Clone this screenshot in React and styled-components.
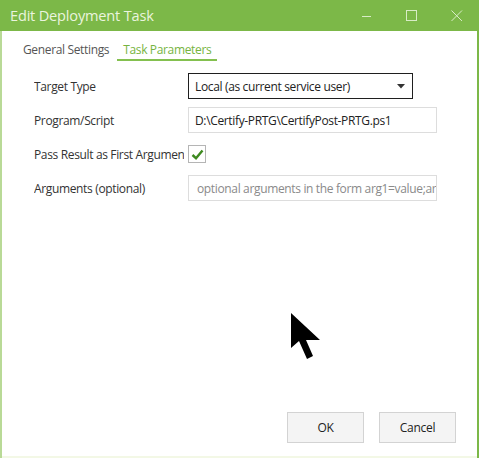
import React from "react";
import styled, { createGlobalStyle } from "styled-components";

const Global = createGlobalStyle`
  html, body { margin: 0; padding: 0; background: #ffffff; }
  body { font-family: "Open Sans", "Noto Sans", sans-serif; }
  * { box-sizing: border-box; }
`;

const Window = styled.div`
  position: relative;
  width: 479px;
  height: 458px;
  display: flex;
  flex-direction: column;
  background: #7cb848;
  overflow: hidden;
`;

const TitleBar = styled.div`
  height: 31px;
  flex: none;
  display: flex;
  align-items: center;
  padding-left: 10px;
  color: #eaf4de;
  font-size: 14.6px;
  letter-spacing: -0.2px;
`;

const Title = styled.div`
  flex: 1;
  padding-bottom: 1px;
`;

const Controls = styled.div`
  display: flex;
  align-items: center;
  height: 100%;
`;

const Ctrl = styled.div`
  width: 45px;
  height: 31px;
  display: flex;
  align-items: center;
  justify-content: center;
`;

const Body = styled.div`
  flex: 1;
  margin: 0 2px 0 2px;
  background: #ffffff;
  display: flex;
  flex-direction: column;
  position: relative;
  border-bottom: 2px solid #f3f8e6;
`;

const LeftEdge = styled.div`
  position: absolute;
  left: -2px;
  top: 0;
  bottom: -2px;
  width: 2px;
  background: #b9da97;
`;

const Tabs = styled.div`
  display: flex;
  gap: 2px;
  padding: 10px 0 0 15px;
  height: 31px;
  flex: none;
`;

const Tab = styled.div`
  padding: 0 6px;
  font-size: 12px;
  letter-spacing: -0.35px;
  color: ${(p) => (p.$active ? "#76b441" : "#555555")};
  border-bottom: 2px solid ${(p) => (p.$active ? "#84c04f" : "transparent")};
  height: 20px;
  line-height: 18px;
`;

const Form = styled.div`
  display: grid;
  grid-template-columns: 154px auto;
  grid-auto-rows: 26px;
  row-gap: 8px;
  padding: 11px 0 0 32px;
  align-items: center;
  justify-items: start;
`;

const Label = styled.div`
  font-size: 12px;
  letter-spacing: -0.35px;
  color: #333333;
  width: 150px;
  white-space: nowrap;
  overflow: hidden;
`;

const Select = styled.div`
  width: 225px;
  height: 26px;
  border: 1px solid #1f1f1f;
  display: flex;
  align-items: center;
  justify-content: space-between;
  padding: 0 7px 0 6px;
  font-size: 12px;
  letter-spacing: -0.35px;
  color: #222222;
`;

const Input = styled.div`
  width: 249px;
  height: 26px;
  border: 1px solid #dddddd;
  display: flex;
  align-items: center;
  padding: 0 7px 0 ${(p) => (p.$placeholder ? "8px" : "6px")};
  font-size: 12px;
  letter-spacing: -0.35px;
  color: ${(p) => (p.$placeholder ? "#8a8a8a" : "#222222")};
  white-space: nowrap;
  overflow: hidden;
`;

const Check = styled.div`
  width: 18px;
  height: 18px;
  border: 1px solid #b5b5b5;
  display: flex;
  align-items: center;
  justify-content: center;
`;

const Spacer = styled.div`
  flex: 1;
`;

const Footer = styled.div`
  display: flex;
  justify-content: flex-end;
  gap: 15px;
  padding: 0 21px 13px 0;
`;

const Button = styled.div`
  width: 77px;
  height: 31px;
  border: 1px solid #d3d3d3;
  background: #f4f4f4;
  display: flex;
  align-items: center;
  justify-content: center;
  font-size: 12px;
  letter-spacing: -0.3px;
  color: #222222;
`;

const Cursor = styled.svg`
  position: absolute;
  left: 290px;
  top: 312px;
`;

export default function App() {
  return (
    <>
      <Global />
      <Window>
        <TitleBar>
          <Title>Edit Deployment Task</Title>
          <Controls>
            <Ctrl>
              <svg width="12" height="12" viewBox="0 0 12 12">
                <line x1="1" y1="6.5" x2="10" y2="6.5" stroke="#d8ecc6" strokeWidth="1" />
              </svg>
            </Ctrl>
            <Ctrl>
              <svg width="12" height="12" viewBox="0 0 12 12">
                <rect x="0.5" y="0.5" width="10" height="10" fill="none" stroke="#d8ecc6" strokeWidth="1" />
              </svg>
            </Ctrl>
            <Ctrl>
              <svg width="12" height="12" viewBox="0 0 12 12">
                <path d="M0.5 0.5 L11 11 M11 0.5 L0.5 11" stroke="#d8ecc6" strokeWidth="1" />
              </svg>
            </Ctrl>
          </Controls>
        </TitleBar>
        <Body>
          <LeftEdge />
          <Tabs>
            <Tab>General Settings</Tab>
            <Tab $active>Task Parameters</Tab>
          </Tabs>
          <Form>
            <Label>Target Type</Label>
            <Select>
              <span>Local (as current service user)</span>
              <svg width="8" height="5" viewBox="0 0 8 5">
                <path d="M0 0 H8 L4 4.5 Z" fill="#333333" />
              </svg>
            </Select>
            <Label>Program/Script</Label>
            <Input>D:\Certify-PRTG\CertifyPost-PRTG.ps1</Input>
            <Label>Pass Result as First Argument</Label>
            <Check>
              <svg width="13" height="11" viewBox="0 0 13 11">
                <path d="M1.5 6 L5 9.2 L11.5 1.5" fill="none" stroke="#3e8a20" strokeWidth="2.4" />
              </svg>
            </Check>
            <Label>Arguments (optional)</Label>
            <Input $placeholder>optional arguments in the form arg1=value;arg2=value</Input>
          </Form>
          <Spacer />
          <Footer>
            <Button>OK</Button>
            <Button>Cancel</Button>
          </Footer>
        </Body>
        <Cursor width="32" height="52" viewBox="0 0 32 52">
          <path d="M1 1 V36 L9 29 L17 47 L23 44 L16 28 L30 28 Z" fill="#000000" />
        </Cursor>
      </Window>
    </>
  );
}
